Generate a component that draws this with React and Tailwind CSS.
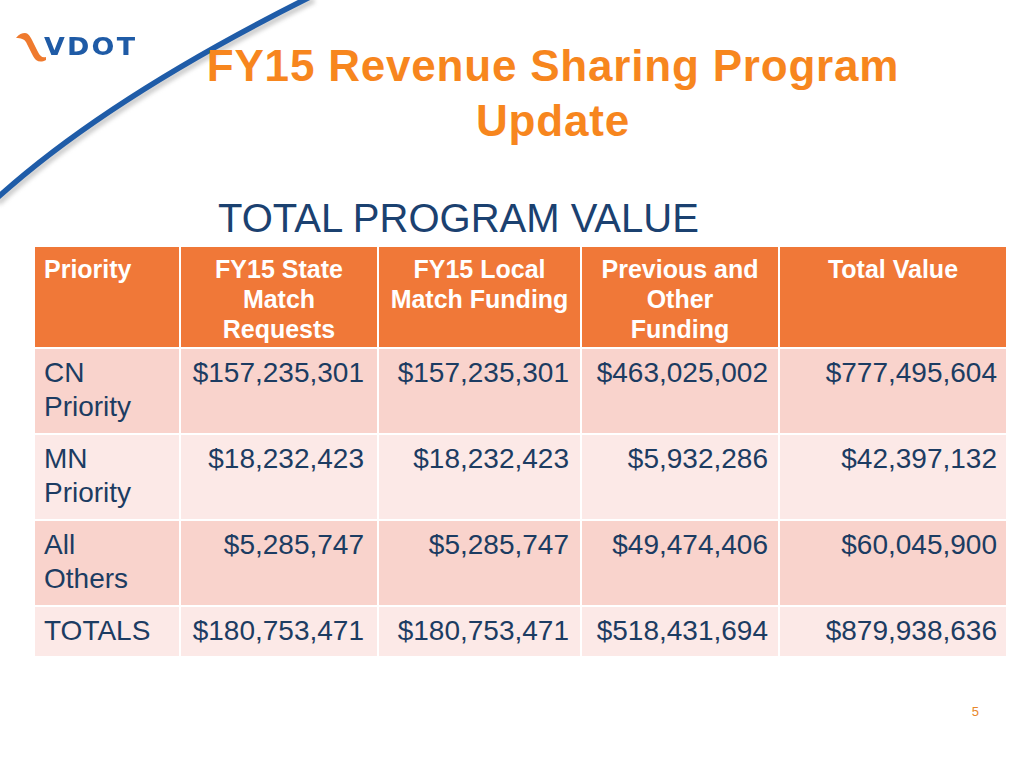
const headers = [
  { lines: ['Priority'], align: 'text-left pl-[9px]' },
  { lines: ['FY15 State', 'Match', 'Requests'], align: 'text-center' },
  { lines: ['FY15 Local', 'Match Funding'], align: 'text-center' },
  { lines: ['Previous and', 'Other', 'Funding'], align: 'text-center' },
  { lines: ['Total Value'], align: 'text-center' },
]

const rows = [
  { label: ['CN', 'Priority'], values: ['$157,235,301', '$157,235,301', '$463,025,002', '$777,495,604'], tall: true },
  { label: ['MN', 'Priority'], values: ['$18,232,423', '$18,232,423', '$5,932,286', '$42,397,132'], tall: true },
  { label: ['All', 'Others'], values: ['$5,285,747', '$5,285,747', '$49,474,406', '$60,045,900'], tall: true },
  { label: ['TOTALS'], values: ['$180,753,471', '$180,753,471', '$518,431,694', '$879,938,636'], tall: false },
]

// right padding differs a little per column in the original slide
const valuePad = ['pr-[13px]', 'pr-[11px]', 'pr-[10px]', 'pr-[9px]']

function Swoosh() {
  return (
    <svg width="1024" height="260" className="absolute left-0 top-0 pointer-events-none" aria-hidden>
      <defs>
        <filter id="blur" x="-10%" y="-10%" width="120%" height="120%">
          <feGaussianBlur stdDeviation="2" />
        </filter>
      </defs>
      <path d="M-4 199 Q107 98 312 -4" fill="none" stroke="#9a9a9a" strokeWidth="6" opacity="0.5" filter="url(#blur)" transform="translate(2 4)" />
      <path d="M-4 199 Q107 98 312 -4" fill="none" stroke="#1f5ca8" strokeWidth="5.5" />
    </svg>
  )
}

function Logo() {
  return (
    <div className="flex items-center">
      <svg width="32" height="32" viewBox="0 0 32 32" aria-hidden className="shrink-0">
        <path
          d="M1 7 C4 3 7 2 10 2 C13 2 15 5 17 9 L23 21 C25 25 27 27 31 26 L31 29 C27 31 24 31 21 29 C19 27 18 25 17 23 L11 11 C9 8 6 7 1 7 Z"
          fill="#ef7a2e"
        />
      </svg>
      <span
        className="-ml-[3px] text-[24px] leading-none font-bold text-[#1f5ba6] tracking-[2px] origin-left scale-x-[1.12]"
        style={{ fontFamily: '"DejaVu Sans", sans-serif' }}
      >
        VDOT
      </span>
    </div>
  )
}

export default function App() {
  return (
    <div
      className="relative w-[1024px] h-[768px] bg-white overflow-hidden"
      style={{ fontFamily: '"Liberation Sans", Arial, sans-serif' }}
    >
      <Swoosh />
      <div className="relative flex">
        <div className="w-[180px] shrink-0 pl-[15px] pt-[31px]">
          <Logo />
        </div>
        <h1 className="w-[746px] pt-[38px] text-center text-[44px] leading-[55px] font-bold tracking-[0.8px] text-[#f7861e]">
          FY15 Revenue Sharing Program
          <br />
          Update
        </h1>
      </div>

      <h2 className="relative mt-[46px] ml-[218px] text-[40px] leading-[48px] text-[#1b4170]">
        TOTAL PROGRAM VALUE
      </h2>

      <div className="relative mt-[5px] ml-[35px] w-[971px] grid grid-cols-[144px_196px_201px_196px_226px] gap-[2px] bg-white">
        {headers.map((h, i) => (
          <div
            key={i}
            className={`h-[100px] bg-[#f07838] pt-[7px] text-white font-bold text-[25px] leading-[30px] ${h.align}`}
          >
            {h.lines.map((l) => (
              <div key={l}>{l}</div>
            ))}
          </div>
        ))}

        {rows.map((r, ri) => {
          const bg = ri % 2 === 0 ? 'bg-[#f9d3cc]' : 'bg-[#fce9e7]'
          const h = r.tall ? 'h-[84px]' : 'h-[49px]'
          return [
            <div key={`l${ri}`} className={`${bg} ${h} pt-[7px] pl-[9px] text-[28px] leading-[34px] text-[#1c3c62]`}>
              {r.label.map((l) => (
                <div key={l}>{l}</div>
              ))}
            </div>,
            ...r.values.map((v, vi) => (
              <div
                key={`v${ri}${vi}`}
                className={`${bg} ${h} pt-[7px] text-right ${valuePad[vi]} text-[28px] leading-[34px] text-[#1c3c62]`}
              >
                {v}
              </div>
            )),
          ]
        })}
      </div>

      <div className="relative mt-[48px] pr-[45px] text-right text-[13px] leading-[16px] text-[#e8862a]">5</div>
    </div>
  )
}
